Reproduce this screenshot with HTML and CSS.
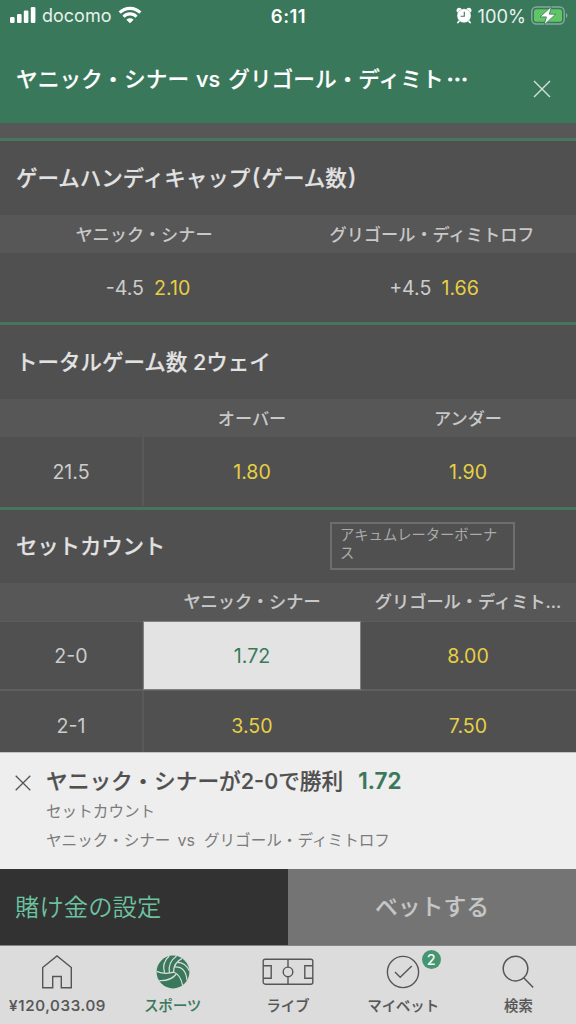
FILE: index.html
```html
<!DOCTYPE html>
<html lang="ja">
<head>
<meta charset="utf-8">
<meta name="viewport" content="width=device-width, initial-scale=1">
<title>ヤニック・シナー vs グリゴール・ディミトロフ</title>
<link rel="stylesheet" href="styles.css">
</head>
<body>
<div class="app">
  <header class="header">
    <div class="status">
      <div class="status-left">
        <svg class="signal" viewBox="0 0 26 16" width="26" height="16" fill="#fff"><rect x="0" y="10" width="4.6" height="6" rx="1.2"/><rect x="7" y="7" width="4.6" height="9" rx="1.2"/><rect x="13.8" y="3.6" width="4.6" height="12.4" rx="1.2"/><rect x="20.8" y="0" width="4.6" height="16" rx="1.2"/></svg>
        <span class="carrier">docomo</span>
        <svg class="wifi" viewBox="0 0 24 18" width="24" height="18" fill="none" stroke="#fff" stroke-width="3.1"><path d="M1.7 6.7a14.4 14.4 0 0 1 20.6 0"/><path d="M5.5 10.7a9 9 0 0 1 13 0"/><path d="M12 17.3 8.4 13.7a5.2 5.2 0 0 1 7.2 0z" fill="#fff" stroke="none"/></svg>
      </div>
      <div class="clock">6:11</div>
      <div class="status-right">
        <svg class="alarm" viewBox="0 0 16 17" width="16" height="17"><path d="M3.6 13.6 1.9 15.5M12.4 13.6l1.7 1.9" stroke="#fff" stroke-width="1.7" stroke-linecap="round"/><circle cx="3.2" cy="3.3" r="2.6" fill="#fff"/><circle cx="12.8" cy="3.3" r="2.6" fill="#fff"/><circle cx="8" cy="8.8" r="7" fill="#fff" stroke="#39785b" stroke-width=".3"/><path d="M8.3 4.8v4.4H4.6" fill="none" stroke="#39785b" stroke-width="1.1"/></svg>
        <span class="percent">100%</span>
        <svg class="battery" viewBox="0 0 37 19" width="37" height="19"><rect x=".8" y="1" width="32.4" height="17" rx="4.5" fill="none" stroke="#82ab98" stroke-width="1.4"/><path d="M35 7v5q1.5-.8 1.5-2.5T35 7" fill="#82ab98"/><rect x="3" y="3.2" width="28" height="12.6" rx="2.6" fill="#61c466"/><path d="M20.4.6 9 10.9h6.4L13.2 18.9 24.7 8.2h-6.4z" fill="#fff" stroke="#39785b" stroke-width=".8"/></svg>
      </div>
    </div>
    <div class="titlebar">
      <h1 class="event">ヤニック・シナー<span class="vs">vs</span>グリゴール・ディミト<span class="more">⋯</span></h1>
      <svg class="close" viewBox="0 0 18 18" width="18" height="18" fill="none" stroke="#d3e1db" stroke-width="1.4"><path d="m1 1 16 16M17 1 1 17"/></svg>
    </div>
  </header>

  <main class="markets">
    <div class="strip"></div>
    <section class="market">
      <h2 class="market-title">ゲームハンディキャップ<span class="bracket">(</span>ゲーム数<span class="bracket">)</span></h2>
      <div class="row two labels"><span>ヤニック・シナー</span><span>グリゴール・ディミトロフ</span></div>
      <div class="row two odds handicap">
        <span class="cell"><span class="line">-4.5</span><span class="price">2.10</span></span>
        <span class="cell"><span class="line">+4.5</span><span class="price">1.66</span></span>
      </div>
    </section>
    <section class="market totals">
      <h2 class="market-title">トータルゲーム数 2ウェイ</h2>
      <div class="row three labels"><span></span><span>オーバー</span><span>アンダー</span></div>
      <div class="row three odds">
        <span class="cell name">21.5</span><span class="cell price">1.80</span><span class="cell price">1.90</span>
      </div>
    </section>
    <section class="market sets">
      <div class="market-title">
        <h2 class="name-text">セットカウント</h2>
        <span class="bonus">アキュムレーターボーナス</span>
      </div>
      <div class="row three labels strong"><span></span><span>ヤニック・シナー</span><span class="clipped">グリゴール・ディミト...</span></div>
      <div class="row three odds divided">
        <span class="cell name">2-0</span><span class="cell price selected">1.72</span><span class="cell price">8.00</span>
      </div>
      <div class="row three odds">
        <span class="cell name">2-1</span><span class="cell price">3.50</span><span class="cell price">7.50</span>
      </div>
    </section>
  </main>

  <section class="slip">
    <svg class="remove" viewBox="0 0 16 16" width="16" height="16" fill="none" stroke="#555" stroke-width="1.3"><path d="m.7.7 14.6 14.6M15.3.7.7 15.3"/></svg>
    <div class="slip-body">
      <div class="pick">ヤニック・シナーが2-0で勝利<span class="pick-price">1.72</span></div>
      <div class="detail">セットカウント</div>
      <div class="detail">ヤニック・シナー<span class="versus">vs</span>グリゴール・ディミトロフ</div>
    </div>
  </section>
  <div class="actions">
    <div class="stake">賭け金の設定</div>
    <div class="place">ベットする</div>
  </div>

  <nav class="nav">
    <a class="tab">
      <svg class="home" viewBox="0 0 32 36" width="32" height="36" fill="none" stroke="#565656" stroke-width="1.4"><path d="M1.7 13.5 16 2l14.3 11.5v20.3h-10v-11.3h-8.6v11.3h-10z"/></svg>
      <span class="balance">¥120,033.09</span>
    </a>
    <a class="tab active">
      <svg viewBox="0 0 36 36" width="36" height="36"><circle cx="18" cy="18" r="16.4" fill="#39785b"/><g fill="none" stroke="#dcdcdc" stroke-width="1.2"><path d="M1.6 17.4C7.5 19.8 13.3 19.8 18.8 18.2 23 19.6 26 23.2 27.6 31.3"/><path d="M18.6 18.2C18.4 12.4 21.2 7.4 27.2 4.4"/><path d="M4.2 26.6C10.3 27 16.6 25.8 21.4 20"/><path d="M14.4 19C13.3 11.8 15.8 6 21.6 2"/><path d="M9.6 19C7.6 12.8 9.3 6.4 14.2 2"/><path d="M19.6 13C27 12.6 31.2 17.6 32 26.4"/><path d="M22.4 8.4C27.6 8.4 31.8 11.4 34.2 16.8"/></g></svg>
      <span>スポーツ</span>
    </a>
    <a class="tab">
      <svg viewBox="0 0 52 36" width="52" height="36" fill="none" stroke="#565656" stroke-width="1.4"><rect x="1.2" y="5.2" width="49.6" height="25" rx="2"/><path d="M26 5.2v8M26 22.6v7.6M1.2 11.8h8v12.4h-8M50.8 11.8h-8v12.4h8"/><circle cx="26" cy="17.9" r="4.8"/></svg>
      <span>ライブ</span>
    </a>
    <a class="tab">
      <svg viewBox="0 0 36 36" width="36" height="36" fill="none" stroke="#565656" stroke-width="1.4"><circle cx="18" cy="18" r="15.6"/><path d="m10 18 5.2 5.2L26.8 12"/></svg>
      <span>マイベット</span>
      <b class="count">2</b>
    </a>
    <a class="tab">
      <svg class="lens" viewBox="0 0 32 36" width="32" height="36" fill="none" stroke="#565656" stroke-width="1.5"><circle cx="13.5" cy="14.6" r="12.3"/><path d="m21.7 23.8 9.5 9.8"/></svg>
      <span class="search">検索</span>
    </a>
  </nav>
</div>
</body>
</html>
```
FILE: styles.css
```css
* { box-sizing: border-box; }
body {
  margin: 0;
  font-family: Inter, "Noto Sans CJK JP", sans-serif;
  background: #505050;
}
h1, h2 { margin: 0; font-size: inherit; font-weight: inherit; }
svg { display: block; flex: none; }

.app {
  width: 576px;
  height: 1024px;
  display: flex;
  flex-direction: column;
  overflow: hidden;
}

.header { height: 123px; background: #39785b; color: #fff; }
.status {
  display: grid;
  grid-template-columns: 1fr auto 1fr;
  align-items: center;
  height: 30px;
  padding: 0 8px 0 10px;
}
.status-left, .status-right { display: flex; align-items: center; }
.status-right { justify-content: flex-end; }
.carrier { margin: 2px 7px 0 6px; font-size: 18px; color: #e9f1ed; line-height: 24px; }
.clock { margin: 1px 0 0 -1px; font-size: 18.5px; font-weight: 600; letter-spacing: .5px; line-height: 24px; }
.percent { margin: 2px 5px 0 6px; font-size: 18.3px; color: #e9f1ed; line-height: 24px; }

.titlebar { display: flex; justify-content: space-between; padding: 32px 25px 0 16px; }
.event {
  font-size: 21.7px;
  font-weight: 500;
  line-height: 32px;
  white-space: nowrap;
  -webkit-text-stroke: .15px;
}
.vs { margin: 0 8px 0 7px; }
.more { margin-left: 3px; font-family: "Noto Sans CJK JP", sans-serif; -webkit-text-stroke: .8px; }
.close { margin-top: 18px; }

.markets { height: 629px; overflow: hidden; }
.strip { height: 15px; background: #575757; }
.market { border-top: 3px solid #47755f; }
.market-title {
  display: flex;
  align-items: center;
  height: 74px;
  padding: 0 61px 3px 16px;
  color: #e2e2e2;
  font-size: 21.5px;
  font-weight: 500;
  -webkit-text-stroke: .15px;
  white-space: pre;
}
.bracket { padding: 0 1.3px; font-size: 23px; }
.row { display: grid; }
.two { grid-template-columns: 1fr 1fr; }
.three { grid-template-columns: 144px 216px 216px; }
.labels {
  height: 38px;
  align-items: center;
  padding-bottom: 2px;
  background: #575757;
  color: #c8c8c8;
  font-size: 17.2px;
  font-weight: 500;
  text-align: center;
}
.clipped { white-space: nowrap; }
.odds { height: 69px; color: #ccc; font-size: 19.6px; }
.handicap { padding-left: 8px; }
.cell { display: flex; align-items: center; justify-content: center; gap: 10px; padding-top: 1px; }
.handicap .cell:first-child { padding-right: 4px; }
.name { border-right: 2px solid #595959; }
.price { color: #e6cf45; }
.totals .odds { height: 69px; }
.totals .cell { padding: 0; }
.totals { padding-bottom: .5px; }
.sets .market-title { height: 73px; }
.strong { height: 39px; border-bottom: 1px solid #5c5c5c; -webkit-text-stroke: .15px; }
.divided { border-bottom: 2px solid #5f5f5f; }
.selected { background: #e3e3e3; color: #39785b; box-shadow: 0 0 0 1px #808080; }
.name-text { flex: 1; letter-spacing: -.2px; }
.bonus {
  width: 185px;
  height: 48px;
  margin-top: 3px;
  padding: 2px 8px;
  border: 2px solid #6e6e6e;
  color: #aaa;
  font-size: 14.3px;
  font-weight: 400;
  -webkit-text-stroke: 0;
  line-height: 18px;
  white-space: normal;
}

.slip {
  display: flex;
  gap: 15px;
  height: 117px;
  padding: 0 15px;
  background: #eee;
  border-top: 1px solid #c4c4c4;
}
.remove { margin-top: 22px; }
.pick {
  margin-top: 11px;
  color: #505050;
  font-size: 21.7px;
  font-weight: 500;
  line-height: 34px;
  -webkit-text-stroke: .2px;
}
.pick-price { margin-left: 15px; color: #39785b; font-size: 22.5px; font-weight: 600; }
.detail { color: #7b7b7b; font-size: 15.6px; line-height: 28px; }
.versus { margin: 0 9px 0 7px; font-size: 16px; }

.actions { display: grid; grid-template-columns: 1fr 1fr; height: 77px; border-bottom: 1px solid #858585; }
.actions > div { display: flex; align-items: center; padding-bottom: 3px; }
.stake { padding-left: 15px; background: #323232; color: #6cc3a0; font-size: 24.4px; font-weight: 350; }
.place {
  justify-content: center;
  background: #747474;
  color: #c6c6c6;
  font-size: 22.8px;
  font-weight: 500;
  -webkit-text-stroke: .15px;
}

.nav { display: grid; grid-template-columns: repeat(5, 1fr); height: 78px; background: #dcdcdc; }
.tab {
  position: relative;
  display: flex;
  flex-direction: column;
  align-items: center;
  padding-top: 8px;
  color: #565656;
  font-size: 14.3px;
  font-weight: 500;
  line-height: 22px;
  -webkit-text-stroke: .15px;
}
.tab span { margin-top: 5px; }
.tab .balance { font-size: 15.2px; letter-spacing: .65px; }
.home { margin-right: 2px; }
.lens { margin-right: 1px; }
.active { color: #39785b; }
.count {
  position: absolute;
  left: 76px;
  top: 4px;
  width: 19px;
  height: 19px;
  border-radius: 50%;
  background: #43966f;
  color: #fff;
  font-size: 14.5px;
  font-weight: 400;
  line-height: 19px;
  text-align: center;
}
```
